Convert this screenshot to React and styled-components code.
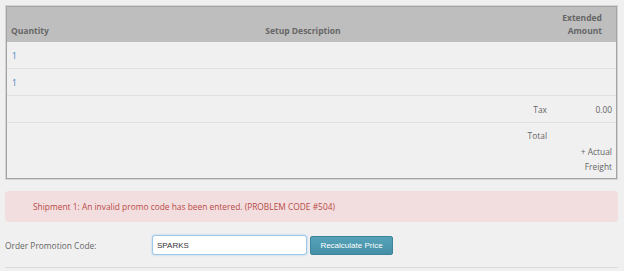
import React from "react";
import styled, { createGlobalStyle } from "styled-components";

const Global = createGlobalStyle`
  html, body { margin: 0; padding: 0; background: #f0f0f0; }
  body { font-family: "Open Sans", "DejaVu Sans", sans-serif; font-size: 8.4px; color: #666; }
`;

const Page = styled.div`
  width: 613px;
  padding: 6px 6px 0 5px;
`;

const Table = styled.div`
  margin: 0 1px;
  border: 1px solid #a3a3a3;
  box-shadow: 0 0 0 1px #d4d4d4;
  background: #f0f0f0;
`;

const Row = styled.div`
  display: grid;
  grid-template-columns: 43px 1fr 60px;
  min-height: ${(p) => p.$h}px;
  box-sizing: border-box;
  border-bottom: ${(p) => (p.$last ? "none" : "1px solid #e0e0e0")};
  align-items: ${(p) => p.$align || "center"};
`;

const HeadRow = styled(Row)`
  background: #bebebe;
  border-bottom: none;
  align-items: end;
`;

const Th = styled.div`
  font-weight: 700;
  font-size: 8.5px;
  line-height: 13px;
  color: #666;
  padding: 0 ${(p) => p.$pr || 0}px 5px ${(p) => p.$pl || 0}px;
  text-align: ${(p) => p.$align || "left"};
`;

const Td = styled.div`
  line-height: ${(p) => p.$lh || 13}px;
  padding: ${(p) => p.$pt || 0}px ${(p) => p.$pr || 0}px 0 ${(p) => p.$pl || 0}px;
  text-align: ${(p) => p.$align || "left"};
  color: ${(p) => (p.$link ? "#3b82c4" : "#666")};
`;

const Alert = styled.div`
  margin-top: 12px;
  height: 31px;
  display: flex;
  align-items: center;
  padding-left: 28px;
  background: #f2dede;
  border-radius: 4px;
  color: #b94a48;
`;

const PromoRow = styled.div`
  margin-top: 13px;
  display: flex;
  align-items: center;
  height: 20px;
`;

const Label = styled.span`
  width: 147px;
  color: #666;
`;

const Input = styled.input`
  box-sizing: border-box;
  width: 155px;
  height: 20px;
  border: 1px solid #9cc6ea;
  border-radius: 3px;
  box-shadow: 0 0 2px rgba(102, 175, 233, 0.6);
  background: #fff;
  padding: 0 4px;
  font-family: "Liberation Sans", Arial, sans-serif;
  font-size: 8px;
  color: #333;
  outline: none;
`;

const Button = styled.button`
  box-sizing: border-box;
  margin-left: 3px;
  width: 83px;
  height: 19px;
  border: 1px solid #3d8399;
  border-radius: 2px;
  background: linear-gradient(#55a2b9, #4590a7);
  color: #fff;
  font-family: "Liberation Sans", Arial, sans-serif;
  font-size: 8px;
  padding: 0;
`;

const Divider = styled.div`
  margin-top: 12px;
  height: 1px;
  background: #dcdcdc;
`;

export default function App() {
  return (
    <Page>
      <Global />
      <Table>
        <HeadRow $h={35}>
          <Th $pl={4}>Quantity</Th>
          <Th $align="center">Setup Description</Th>
          <Th $align="right" $pr={14}>
            Extended
            <br />
            Amount
          </Th>
        </HeadRow>
        <Row $h={27}>
          <Td $pl={5} $link>1</Td>
          <Td />
          <Td />
        </Row>
        <Row $h={27}>
          <Td $pl={5} $link>1</Td>
          <Td />
          <Td />
        </Row>
        <Row $h={27}>
          <Td />
          <Td $align="right" $pr={9}>Tax</Td>
          <Td $align="right" $pr={4}>0.00</Td>
        </Row>
        <Row $h={55} $align="start" $last>
          <Td />
          <Td $align="right" $pr={9} $pt={5} $lh={15.5}>Total</Td>
          <Td $align="right" $pr={4} $pt={20.5} $lh={15.5}>+ Actual Freight</Td>
        </Row>
      </Table>
      <Alert>Shipment 1: An invalid promo code has been entered. (PROBLEM CODE #504)</Alert>
      <PromoRow>
        <Label>Order Promotion Code:</Label>
        <Input defaultValue="SPARKS" />
        <Button>Recalculate Price</Button>
      </PromoRow>
      <Divider />
    </Page>
  );
}
